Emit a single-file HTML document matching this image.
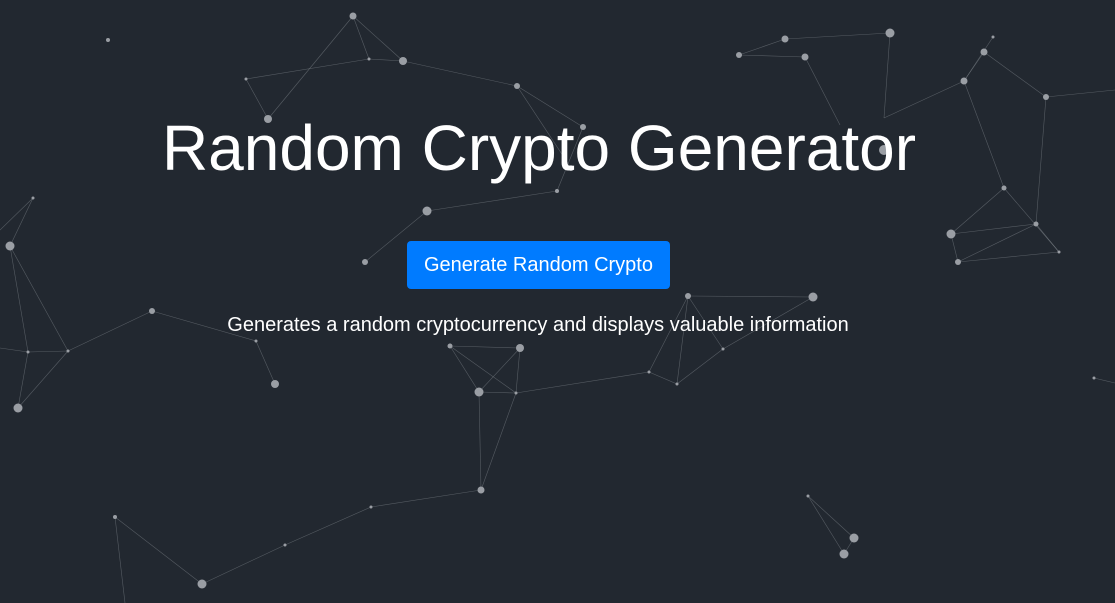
<!DOCTYPE html>
<html><head><meta charset="utf-8"><style>
html,body{margin:0;padding:0;width:1115px;height:603px;overflow:hidden;background:#222830;font-family:"Liberation Sans",Arial,sans-serif;color:#fff}
svg{position:absolute;left:0;top:0}
h1{position:absolute;left:0;width:1078px;top:112px;margin:0;text-align:center;font-weight:400;font-size:64px;line-height:72px}
.btn{position:absolute;left:407px;top:241px;width:263px;height:48px;background:#007bff;border-radius:4px;font-size:20px;line-height:48px;text-align:center}
p{position:absolute;left:0;width:1076px;top:313px;margin:0;text-align:center;font-size:20px;line-height:24px}
</style></head><body>
<svg width="1115" height="603" stroke="#8a8f96" stroke-width="0.6" stroke-opacity="0.5" fill="#9a9ea4">
<g>
<line x1="353" y1="16" x2="403" y2="61"/><line x1="353" y1="16" x2="369" y2="59"/><line x1="246" y1="79" x2="369" y2="59"/><line x1="369" y1="59" x2="403" y2="61"/><line x1="246" y1="79" x2="268" y2="119"/><line x1="268" y1="119" x2="353" y2="16"/><line x1="403" y1="61" x2="517" y2="86"/><line x1="517" y1="86" x2="583" y2="127"/><line x1="583" y1="127" x2="557" y2="191"/><line x1="517" y1="86" x2="571" y2="168"/>
<line x1="427" y1="211" x2="557" y2="191"/><line x1="427" y1="211" x2="365" y2="262"/><line x1="785" y1="39" x2="739" y2="55"/><line x1="739" y1="55" x2="805" y2="57"/><line x1="785" y1="39" x2="890" y2="33"/><line x1="805" y1="57" x2="840" y2="125"/><line x1="890" y1="33" x2="884" y2="118"/><line x1="884" y1="118" x2="964" y2="81"/><line x1="964" y1="81" x2="984" y2="52"/><line x1="984" y1="52" x2="1046" y2="97"/><line x1="964" y1="81" x2="1004" y2="188"/><line x1="1004" y1="188" x2="951" y2="234"/><line x1="951" y1="234" x2="958" y2="262"/><line x1="958" y1="262" x2="1036" y2="224"/><line x1="1036" y1="224" x2="1059" y2="252"/><line x1="951" y1="234" x2="1036" y2="224"/><line x1="1004" y1="188" x2="1059" y2="252"/><line x1="958" y1="262" x2="1059" y2="252"/><line x1="1046" y1="97" x2="1036" y2="224"/><line x1="993" y1="37" x2="964" y2="81"/><line x1="1046" y1="97" x2="1115" y2="90"/>
<line x1="688" y1="296" x2="813" y2="297"/><line x1="688" y1="296" x2="723" y2="349"/><line x1="688" y1="296" x2="649" y2="372"/><line x1="649" y1="372" x2="677" y2="384"/><line x1="677" y1="384" x2="723" y2="349"/><line x1="723" y1="349" x2="813" y2="297"/><line x1="688" y1="296" x2="677" y2="384"/>
<line x1="450" y1="346" x2="520" y2="348"/><line x1="450" y1="346" x2="479" y2="392"/><line x1="479" y1="392" x2="520" y2="348"/><line x1="479" y1="392" x2="516" y2="393"/><line x1="520" y1="348" x2="516" y2="393"/><line x1="516" y1="393" x2="649" y2="372"/><line x1="450" y1="346" x2="516" y2="393"/><line x1="516" y1="393" x2="481" y2="490"/><line x1="479" y1="392" x2="481" y2="490"/>
<line x1="481" y1="490" x2="371" y2="507"/><line x1="371" y1="507" x2="285" y2="545"/><line x1="285" y1="545" x2="202" y2="584"/><line x1="115" y1="517" x2="202" y2="584"/><line x1="115" y1="517" x2="125" y2="603"/>
<line x1="808" y1="496" x2="854" y2="538"/><line x1="808" y1="496" x2="844" y2="554"/><line x1="854" y1="538" x2="844" y2="554"/>
<line x1="152" y1="311" x2="68" y2="351"/><line x1="68" y1="351" x2="28" y2="352"/><line x1="28" y1="352" x2="18" y2="408"/><line x1="68" y1="351" x2="18" y2="408"/><line x1="10" y1="246" x2="28" y2="352"/><line x1="10" y1="246" x2="33" y2="198"/><line x1="0" y1="230" x2="33" y2="198"/><line x1="0" y1="348" x2="28" y2="352"/><line x1="10" y1="246" x2="68" y2="351"/><line x1="152" y1="311" x2="256" y2="341"/><line x1="256" y1="341" x2="275" y2="384"/><line x1="1094" y1="378" x2="1115" y2="383"/>
</g>
<g stroke="none">
<circle cx="353" cy="16" r="3.5"/><circle cx="403" cy="61" r="4"/><circle cx="369" cy="59" r="1.5"/><circle cx="246" cy="79" r="1.5"/><circle cx="268" cy="119" r="4"/><circle cx="108" cy="40" r="2"/><circle cx="517" cy="86" r="3"/><circle cx="583" cy="127" r="3"/><circle cx="571" cy="168" r="3"/><circle cx="557" cy="191" r="2"/><circle cx="427" cy="211" r="4.5"/><circle cx="365" cy="262" r="3"/>
<circle cx="785" cy="39" r="3.5"/><circle cx="739" cy="55" r="3"/><circle cx="805" cy="57" r="3.5"/><circle cx="890" cy="33" r="4.5"/><circle cx="884" cy="150" r="5"/><circle cx="964" cy="81" r="3.5"/><circle cx="984" cy="52" r="3.5"/><circle cx="993" cy="37" r="1.5"/><circle cx="1046" cy="97" r="3"/><circle cx="1004" cy="188" r="2.5"/><circle cx="951" cy="234" r="4.5"/><circle cx="958" cy="262" r="3"/><circle cx="1036" cy="224" r="2.5"/><circle cx="1059" cy="252" r="1.5"/>
<circle cx="688" cy="296" r="3"/><circle cx="813" cy="297" r="4.5"/><circle cx="723" cy="349" r="1.5"/><circle cx="649" cy="372" r="1.5"/><circle cx="677" cy="384" r="1.5"/>
<circle cx="450" cy="346" r="2.5"/><circle cx="520" cy="348" r="4"/><circle cx="479" cy="392" r="4.5"/><circle cx="516" cy="393" r="1.5"/><circle cx="481" cy="490" r="3.5"/><circle cx="371" cy="507" r="1.5"/><circle cx="285" cy="545" r="1.5"/><circle cx="202" cy="584" r="4.5"/><circle cx="115" cy="517" r="2"/>
<circle cx="808" cy="496" r="1.5"/><circle cx="854" cy="538" r="4.5"/><circle cx="844" cy="554" r="4.5"/>
<circle cx="152" cy="311" r="3"/><circle cx="68" cy="351" r="1.5"/><circle cx="28" cy="352" r="1.5"/><circle cx="18" cy="408" r="4.5"/><circle cx="10" cy="246" r="4.5"/><circle cx="33" cy="198" r="1.5"/><circle cx="256" cy="341" r="1.5"/><circle cx="275" cy="384" r="4"/><circle cx="1094" cy="378" r="1.5"/>
</g>
</svg>
<h1>Random Crypto Generator</h1>
<div class="btn">Generate Random Crypto</div>
<p>Generates a random cryptocurrency and displays valuable information</p>
</body></html>
